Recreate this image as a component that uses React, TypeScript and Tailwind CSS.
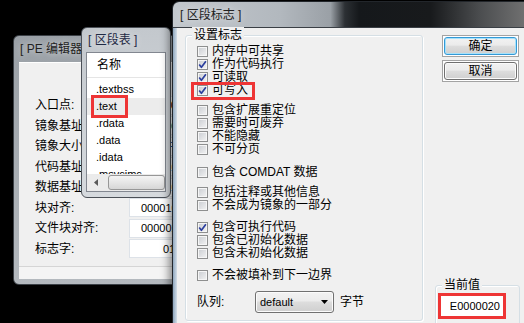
type CheckRowProps = {
  label: string;
  checked?: boolean;
};

const CheckRow = ({ label, checked = false }: CheckRowProps) => {
  return (
    <div className="flex h-[13px] items-center">
      <span className="relative h-[11px] w-[11px] shrink-0 border border-[#8e8f8f] bg-[linear-gradient(135deg,#c9ccd1,#f4f4f4)] shadow-[inset_0_0_0_1px_#f6f6f6]">
        {checked && (
          <svg viewBox="0 0 11 11" className="absolute -left-px -top-px h-[11px] w-[11px]">
            <path
              d="M2.2 5.4 L4.4 8.3 L8.9 2.3"
              fill="none"
              stroke="#2c3f9e"
              strokeWidth="1.7"
              strokeLinejoin="round"
            />
          </svg>
        )}
      </span>
      <span className="ml-[4px] whitespace-nowrap text-[12px] leading-[13px]">{label}</span>
    </div>
  );
};

type DlgButtonProps = {
  label: string;
  focused?: boolean;
};

const DlgButton = ({ label, focused = false }: DlgButtonProps) => {
  return (
    <div className="h-[22px] w-[77px] border border-[#a3a3a3] bg-white p-px">
      <div
        className={
          focused
            ? "flex h-full items-center justify-center rounded-[3px] border border-[#3399d6] bg-[linear-gradient(#f2f2f2,#ebebeb_45%,#dddddd_50%,#cfcfcf)] text-[12px] leading-none shadow-[inset_0_0_0_1px_#a6e2fb]"
            : "flex h-full items-center justify-center rounded-[3px] border border-[#707070] bg-[linear-gradient(#f2f2f2,#ebebeb_45%,#dddddd_50%,#cfcfcf)] text-[12px] leading-none shadow-[inset_0_0_0_1px_#fbfbfb]"
        }
      >
        {label}
      </div>
    </div>
  );
};

const peRows: { label: string; value?: string; pad?: string }[] = [
  { label: "入口点:", value: "00011000" },
  { label: "镜象基址:", value: "00400000" },
  { label: "镜象大小:", value: "0001F000" },
  { label: "代码基址:", value: "00001000" },
  { label: "数据基址:", value: "00001000" },
  { label: "块对齐:", value: "00001000" },
  { label: "文件块对齐:", value: "00000200" },
  { label: "标志字:", value: "010F", pad: "pl-[33px]" },
];

const sections = [".textbss", ".text", ".rdata", ".data", ".idata", ".msvcjmc"];

const PeEditor = () => {
  return (
    <div className="absolute left-[13px] top-[35px] flex h-[250px] w-[180px] flex-col rounded-[6px] border border-[#3b4046] bg-[linear-gradient(#9aa0a6,#b4b9be)] px-[5px] pb-[5px]">
      <div className="flex h-[26px] shrink-0 items-center pl-[1px] text-[12px] text-[#222] [text-shadow:0_0_6px_rgba(255,255,255,0.7)]">
        [ PE 编辑器 ]
      </div>
      <div className="flex flex-1 flex-col border-t border-white bg-[#f0f0f0]">
        <div className="flex flex-col pt-[32px]">
          {peRows.map((row) => (
            <div key={row.label} className="flex h-[20.5px] items-center">
              <span className="w-[110px] shrink-0 whitespace-nowrap pl-[16px] text-[12px] leading-none">
                {row.label}
              </span>
              <div
                className={
                  "flex h-[19px] w-[70px] items-center border border-[#dde2e8] bg-white text-[11px] " +
                  (row.pad ?? "pl-[11px]")
                }
              >
                {row.value}
              </div>
            </div>
          ))}
        </div>
        <div className="mt-auto h-[13px] border-t border-[#d5d5d5] bg-[#f4f4f4]" />
      </div>
    </div>
  );
};

const SectionTable = () => {
  return (
    <div className="absolute left-[81px] top-[27px] flex h-[171px] w-[90px] flex-col rounded-[6px] border border-[#4b5057] bg-[linear-gradient(#c3c8cd,#d6dade)] px-[4px] pb-[5px]">
      <div className="flex h-[24px] shrink-0 items-center pl-[2px] text-[12px] text-[#1f2a44] [text-shadow:0_0_6px_rgba(255,255,255,0.7)]">
        [ 区段表 ]
      </div>
      <div className="flex h-[140px] flex-col border border-[#828790] bg-white">
        <div className="flex h-[25px] shrink-0 items-center border-b border-[#e5e5e5] pl-[10px] text-[12px]">
          名称
        </div>
        <div className="flex-1 overflow-hidden pt-[3px]">
          {sections.map((name) => (
            <div
              key={name}
              className={
                name === ".text"
                  ? "flex h-[17px] items-center bg-[#ececec] pl-[9px] text-[11px]"
                  : "flex h-[17px] items-center pl-[9px] text-[11px]"
              }
            >
              {name}
            </div>
          ))}
        </div>
        <div className="flex h-[17px] shrink-0 items-center bg-[#ebebeb]">
          <div className="flex h-full w-[17px] items-center justify-center">
            <svg viewBox="0 0 4 7" className="h-[7px] w-[4px]">
              <path d="M4 0 L0 3.5 L4 7 Z" fill="#5a5a5a" />
            </svg>
          </div>
          <div className="ml-[4px] h-[15px] flex-1 rounded-[3px] border border-[#979797] bg-[linear-gradient(#f4f4f4,#e6e6e6_50%,#d6d6d6)]" />
        </div>
      </div>
    </div>
  );
};

const SectionFlags = () => {
  return (
    <div className="absolute left-[172px] top-[1px] flex h-[340px] w-[360px] flex-col overflow-hidden rounded-t-[7px] border border-[#22262b] shadow-[-3px_0_8px_rgba(0,0,0,0.45)]">
      <div className="flex h-[26px] shrink-0 items-center border-b border-[#3a3f45] bg-[linear-gradient(to_right,#c3c8cd_0%,#b2b8be_30%,#9aa0a6_44%,#2c3034_48%,#15181b_52%,#181a1c_72%,#4c4e50_86%,#757575_100%)] pl-[7px] text-[12px] text-[#222] [text-shadow:0_0_6px_rgba(255,255,255,0.7)]">
        [ 区段标志 ]
      </div>
      <div className="flex flex-1">
        <div className="w-[4px] shrink-0 bg-[linear-gradient(to_right,#8ea6bd,#d3dde7)]" />
        <div className="flex flex-1 items-start bg-[#f0f0f0]">
          <div className="relative ml-[8px] mt-[7px] h-[286px] w-[238px] shrink-0 rounded-[3px] border border-[#d5dfe5] shadow-[inset_1px_1px_0_#fff,1px_1px_0_#fff]">
            <span className="absolute left-[6px] top-[-9px] bg-[#f0f0f0] px-[2px] text-[12px] leading-[16px]">
              设置标志
            </span>
            <div className="flex flex-col pl-[11px]">
              <div className="mt-[9px]">
                <CheckRow label="内存中可共享" />
                <CheckRow label="作为代码执行" checked />
                <CheckRow label="可读取" checked />
                <CheckRow label="可写入" checked />
              </div>
              <div className="mt-[7px]">
                <CheckRow label="包含扩展重定位" />
                <CheckRow label="需要时可废弃" />
                <CheckRow label="不能隐藏" />
                <CheckRow label="不可分页" />
              </div>
              <div className="mt-[10px]">
                <CheckRow label="包含 COMDAT 数据" />
              </div>
              <div className="mt-[7px]">
                <CheckRow label="包括注释或其他信息" />
                <CheckRow label="不会成为镜象的一部分" />
              </div>
              <div className="mt-[9px]">
                <CheckRow label="包含可执行代码" checked />
                <CheckRow label="包含已初始化数据" />
                <CheckRow label="包含未初始化数据" />
              </div>
              <div className="mt-[9px]">
                <CheckRow label="不会被填补到下一边界" />
              </div>
              <div className="mt-[9px] flex h-[22px] items-center text-[12px]">
                <span className="w-[58px] shrink-0">队列:</span>
                <div className="flex h-[22px] w-[79px] items-center justify-between rounded-[3px] border border-[#707070] bg-[linear-gradient(#f2f2f2,#ebebeb_45%,#dddddd_50%,#cfcfcf)] pl-[4px] pr-[5px] shadow-[inset_0_0_0_1px_#fbfbfb]">
                  <span className="text-[11px]">default</span>
                  <svg viewBox="0 0 7 4" className="h-[4px] w-[7px]">
                    <path d="M0 0 L7 0 L3.5 4 Z" fill="#000" />
                  </svg>
                </div>
                <span className="ml-[6px]">字节</span>
              </div>
            </div>
          </div>
          <div className="ml-[12px] flex w-[85px] shrink-0 flex-col">
            <div className="ml-[7px] mt-[7px] flex flex-col gap-[3px]">
              <DlgButton label="确定" focused />
              <DlgButton label="取消" />
            </div>
            <div className="relative mt-[203px] h-[60px] w-[85px] rounded-[3px] border border-[#d5dfe5] shadow-[inset_1px_1px_0_#fff]">
              <span className="absolute left-[6px] top-[-9px] bg-[#f0f0f0] px-[2px] text-[12px] leading-[16px]">
                当前值
              </span>
              <div className="ml-[5px] mt-[10px] flex h-[20px] w-[62px] items-center justify-end bg-white pr-[3px] text-[11px]">
                E0000020
              </div>
            </div>
          </div>
        </div>
      </div>
    </div>
  );
};

export default function App() {
  return (
    <div className="relative h-[323px] w-[524px] overflow-hidden bg-black font-['Liberation_Sans','Noto_Sans_CJK_SC',sans-serif] text-black">
      <PeEditor />
      <SectionTable />
      <SectionFlags />
      <div className="pointer-events-none absolute left-[91px] top-[95px] h-[23px] w-[37px] border-[3px] border-[#ee3535]" />
      <div className="pointer-events-none absolute left-[191px] top-[82px] h-[18px] w-[64px] border-[3px] border-[#ee3535]" />
      <div className="pointer-events-none absolute left-[438px] top-[293px] h-[26px] w-[68px] border-[3px] border-[#ee3535]" />
    </div>
  );
}
